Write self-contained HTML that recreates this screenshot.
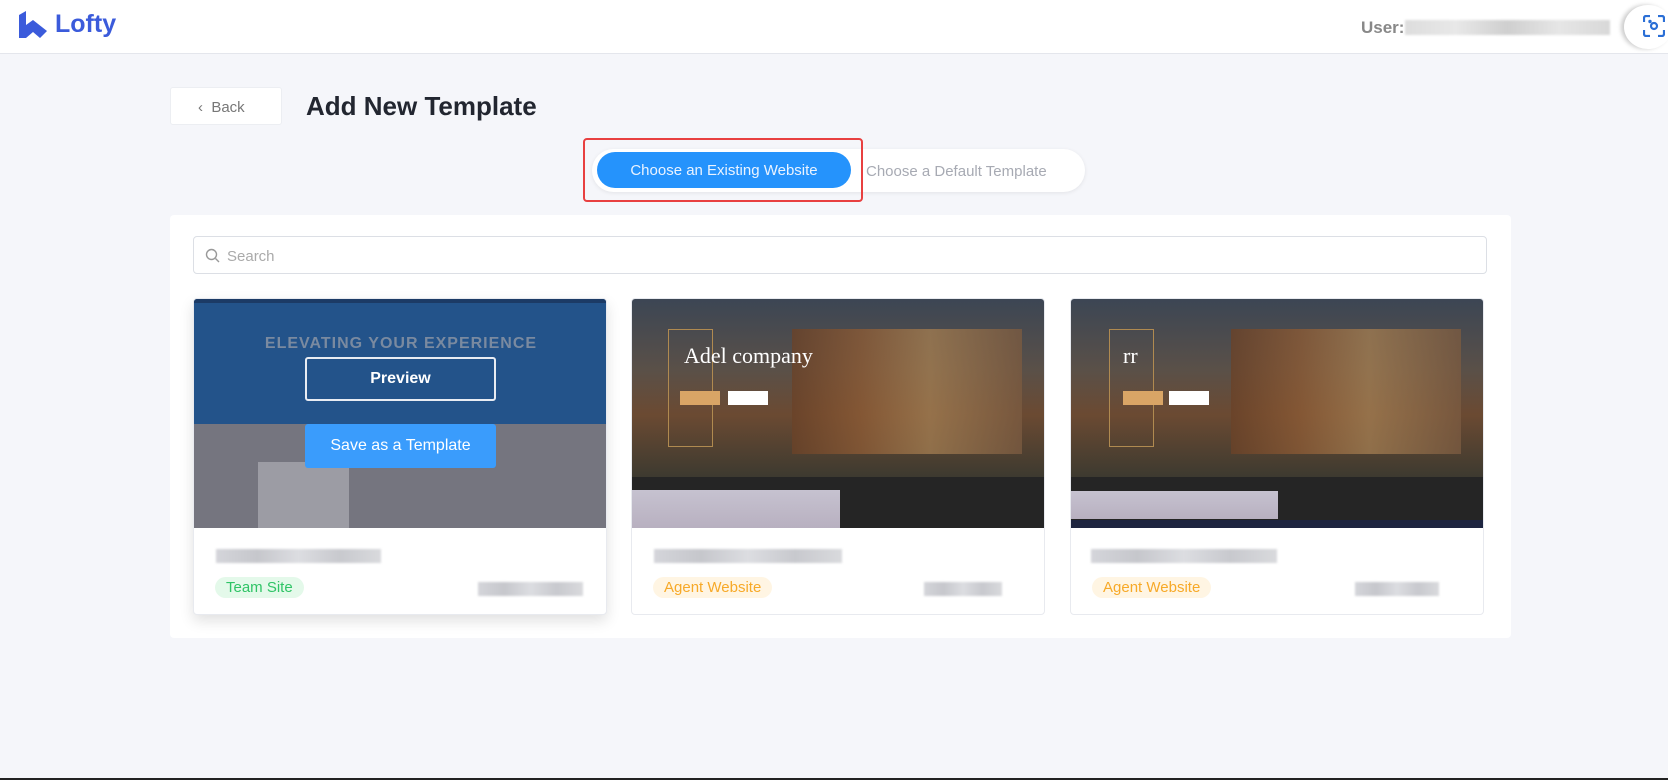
<!DOCTYPE html>
<html><head><meta charset="utf-8">
<style>
*{box-sizing:border-box;margin:0;padding:0}
body{width:1668px;height:780px;overflow:hidden;background:#f5f6fa;font-family:"Liberation Sans",sans-serif;position:relative}
.hdr{position:absolute;left:0;top:0;width:1668px;height:54px;background:#fff;border-bottom:1px solid #e4e6ec}
.abs{position:absolute}
.card{position:absolute;top:298px;width:414px;height:317px;background:#fff;border:1px solid #e8eaef;border-radius:4px;overflow:hidden}
.img{position:absolute;left:0;top:0;width:100%;height:229px}
.blur{position:absolute;height:14px;background:linear-gradient(90deg,#d4d5da,#c6c7cc,#dcdde1,#c8c9ce,#d9dadd);filter:blur(1px)}
.tag{position:absolute;left:22px;top:577px;height:21px;border-radius:11px;font-size:15px;line-height:21px;padding:0 11px}
</style></head><body>
<div class="hdr"></div>
<svg class="abs" style="left:19px;top:11px" width="29" height="28" viewBox="0 0 29 28"><path d="M0 4 L7 0 L7 14 L14 9 L28 20 L21 27 L14 21 L7 27 L0 27Z" fill="#3b5bdb"/></svg>
<div class="abs" style="left:55px;top:10px;font-size:25px;font-weight:bold;color:#3b5bdb">Lofty</div>
<div class="abs" style="left:1361px;top:18px;font-size:17px;font-weight:bold;color:#888">User:</div>
<div class="abs" style="left:1405px;top:20px;width:205px;height:15px;background:linear-gradient(90deg,#ddd,#e8e8e8,#cfcfcf,#e6e6e6,#d8d8d8);filter:blur(1px)"></div>
<div class="abs" style="left:1624px;top:5px;width:48px;height:44px;border-radius:50%;background:#fff;box-shadow:-3px 0 4px #ccc"></div>
<svg class="abs" style="left:1643px;top:15px" width="22" height="22" viewBox="0 0 22 22" fill="none" stroke="#2b6fd6" stroke-width="2.2"><path d="M1 7V3a2 2 0 0 1 2-2h4M15 1h4a2 2 0 0 1 2 2v4M21 15v4a2 2 0 0 1-2 2h-4M7 21H3a2 2 0 0 1-2-2v-4"/><circle cx="11" cy="11" r="3"/><circle cx="7" cy="6.5" r=".6" fill="#2b6fd6"/></svg>

<div class="abs" style="left:170px;top:87px;width:112px;height:38px;background:#fff;border-radius:3px;border:1px solid #eceef2"></div>
<div class="abs" style="left:198px;top:99px;font-size:15px;color:#777">&lsaquo;&nbsp; Back</div>
<div class="abs" style="left:306px;top:91px;font-size:26px;font-weight:bold;color:#222630">Add New Template</div>

<div class="abs" style="left:592px;top:149px;width:493px;height:43px;background:#fff;border-radius:22px;box-shadow:0 1px 4px rgba(0,0,0,.08)"></div>
<div class="abs" style="left:597px;top:152px;width:254px;height:36px;background:#2593fc;border-radius:18px;color:#eaf3ff;font-size:15px;line-height:38px;text-align:center">Choose an Existing Website</div>
<div class="abs" style="left:866px;top:163px;font-size:15px;color:#a7aab3">Choose a Default Template</div>
<div class="abs" style="left:583px;top:138px;width:280px;height:64px;border:2.5px solid #e84040;border-radius:4px"></div>

<div class="abs" style="left:170px;top:215px;width:1341px;height:423px;background:#fff;border-radius:4px"></div>
<div class="abs" style="left:193px;top:236px;width:1294px;height:38px;border:1.5px solid #dcdfe5;border-radius:4px"></div>
<svg class="abs" style="left:205px;top:248px" width="15" height="15" viewBox="0 0 15 15" fill="none" stroke="#999" stroke-width="1.4"><circle cx="6.5" cy="6.5" r="5"/><path d="M10.5 10.5L14 14"/></svg>
<div class="abs" style="left:227px;top:248px;font-size:15px;color:#aaa">Search</div>

<!-- card1 -->
<div class="card" style="left:193px;box-shadow:0 6px 14px rgba(0,0,0,.12)">
 <div class="img" style="height:125px;background:#23538a"></div>
 <div class="img" style="top:0;height:4px;background:#1c3b66"></div>
 <div class="abs" style="left:0;top:36px;width:414px;text-align:center;font-size:16px;letter-spacing:1px;color:#7a8aa0;font-weight:bold">ELEVATING YOUR EXPERIENCE</div>
 <div class="img" style="top:125px;height:104px;background:#75757f"></div>
 <div class="abs" style="left:64px;top:163px;width:91px;height:66px;background:#9c9ca4"></div>
 <div class="abs" style="left:111px;top:58px;width:191px;height:44px;border:2px solid #e8ecf3;border-radius:3px;color:#fff;font-weight:bold;font-size:16px;line-height:40px;text-align:center">Preview</div>
 <div class="abs" style="left:111px;top:125px;width:191px;height:44px;background:#3a9cfc;border-radius:3px;color:#fff;font-size:16px;line-height:44px;text-align:center">Save as a Template</div>
 <div class="blur" style="left:22px;top:250px;width:165px"></div>
 <div class="blur" style="left:284px;top:283px;width:105px"></div>
</div>
<div class="tag" style="left:215px;background:#e4f9ea;color:#2fc466">Team Site</div>

<!-- card2 -->
<div class="card" style="left:631px">
 <div class="img" style="height:178px;background:linear-gradient(180deg,#3c4654 0%,#5a5048 40%,#6b4a32 65%,#3d3a30 100%)"></div>
 <div class="abs" style="left:160px;top:30px;width:230px;height:125px;background:linear-gradient(90deg,#6a4228,#8a5a35 30%,#a07b50 60%,#7a5a40);opacity:.8"></div>
 <div class="abs" style="left:36px;top:30px;width:45px;height:118px;border:1px solid #b08a50"></div>
 <div class="abs" style="left:52px;top:44px;font-family:'Liberation Serif',serif;font-size:22px;color:#fff">Adel company</div>
 <div class="abs" style="left:48px;top:92px;width:40px;height:14px;background:#d9a566"></div>
 <div class="abs" style="left:96px;top:92px;width:40px;height:14px;background:#fff"></div>
 <div class="img" style="top:178px;height:51px;background:#252525"></div>
 <div class="abs" style="left:0;top:191px;width:208px;height:38px;background:linear-gradient(180deg,#c6c2d0,#b8b0c0)"></div>
 <div class="blur" style="left:22px;top:250px;width:188px"></div>
 <div class="blur" style="left:292px;top:283px;width:78px"></div>
</div>
<div class="tag" style="left:653px;background:#fff5e3;color:#f7a928">Agent Website</div>

<!-- card3 -->
<div class="card" style="left:1070px">
 <div class="img" style="height:178px;background:linear-gradient(180deg,#3c4654 0%,#5a5048 40%,#6b4a32 65%,#3d3a30 100%)"></div>
 <div class="abs" style="left:160px;top:30px;width:230px;height:125px;background:linear-gradient(90deg,#6a4228,#8a5a35 30%,#a07b50 60%,#7a5a40);opacity:.8"></div>
 <div class="abs" style="left:38px;top:30px;width:45px;height:118px;border:1px solid #b08a50"></div>
 <div class="abs" style="left:52px;top:44px;font-family:'Liberation Serif',serif;font-size:22px;color:#fff">rr</div>
 <div class="abs" style="left:52px;top:92px;width:40px;height:14px;background:#d9a566"></div>
 <div class="abs" style="left:98px;top:92px;width:40px;height:14px;background:#fff"></div>
 <div class="img" style="top:178px;height:51px;background:#252525"></div>
 <div class="abs" style="left:0;top:192px;width:207px;height:28px;background:linear-gradient(180deg,#c6c2d0,#b8b0c0)"></div>
 <div class="img" style="top:221px;height:8px;background:#1e2540"></div>
 <div class="blur" style="left:20px;top:250px;width:186px"></div>
 <div class="blur" style="left:284px;top:283px;width:84px"></div>
</div>
<div class="tag" style="left:1092px;background:#fff5e3;color:#f7a928">Agent Website</div>

<div class="abs" style="left:0;top:778px;width:1668px;height:2px;background:#222"></div>
</body></html>
